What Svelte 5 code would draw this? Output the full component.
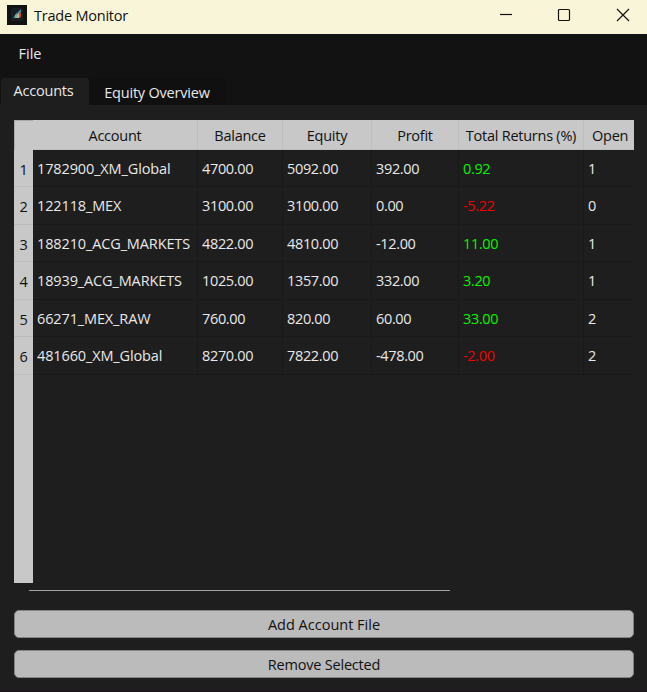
<script>
    let tab = 'accounts';

    const columns = [
        { key: 'account', label: 'Account' },
        { key: 'balance', label: 'Balance' },
        { key: 'equity', label: 'Equity' },
        { key: 'profit', label: 'Profit' },
        { key: 'returns', label: 'Total Returns (%)' },
        { key: 'open', label: 'Open' }
    ];

    const accounts = [
        { account: '1782900_XM_Global', balance: '4700.00', equity: '5092.00', profit: '392.00', returns: '0.92', open: 1 },
        { account: '122118_MEX', balance: '3100.00', equity: '3100.00', profit: '0.00', returns: '-5.22', open: 0 },
        { account: '188210_ACG_MARKETS', balance: '4822.00', equity: '4810.00', profit: '-12.00', returns: '11.00', open: 1 },
        { account: '18939_ACG_MARKETS', balance: '1025.00', equity: '1357.00', profit: '332.00', returns: '3.20', open: 1 },
        { account: '66271_MEX_RAW', balance: '760.00', equity: '820.00', profit: '60.00', returns: '33.00', open: 2 },
        { account: '481660_XM_Global', balance: '8270.00', equity: '7822.00', profit: '-478.00', returns: '-2.00', open: 2 }
    ];
</script>

<div class="window">
    <header class="titlebar">
        <svg class="logo" width="20" height="20" viewBox="0 0 20 20">
            <rect width="20" height="20" fill="#111313" />
            <rect x="4" y="3" width="12" height="13" rx="2" fill="#1b1e20" />
            <path d="M6 13L8 10V13Z" fill="#397f80" />
            <path d="M8 13V10L10 8V13Z" fill="#73b7a2" />
            <path d="M9 9L14 4V7L10 11Z" fill="#3e8db0" />
            <path d="M10 13V10L12 8V13Z" fill="#c5b09a" />
            <path d="M12 13V9L14 7V12Z" fill="#d64a28" />
        </svg>
        <span class="title">Trade Monitor</span>
        <div class="controls">
            <button aria-label="Minimize">
                <svg width="14" height="14" viewBox="0 0 14 14"><path d="M1 6.5H13" /></svg>
            </button>
            <button aria-label="Maximize">
                <svg width="14" height="14" viewBox="0 0 14 14"><rect x="1.5" y="1.5" width="11" height="11" rx="1" /></svg>
            </button>
            <button aria-label="Close">
                <svg width="14" height="14" viewBox="0 0 14 14"><path d="M1 1L13 13M13 1L1 13" /></svg>
            </button>
        </div>
    </header>

    <nav class="menubar"><span>File</span></nav>

    <div class="tabs">
        <button class="tab" class:active={tab === 'accounts'} on:click={() => (tab = 'accounts')}>Accounts</button>
        <button class="tab overview" class:active={tab === 'equity'} on:click={() => (tab = 'equity')}>Equity Overview</button>
    </div>

    <main class="pane">
        <div class="table">
            <div class="row head">
                <span class="corner"></span>
                {#each columns as col}
                    <span class="th {col.key}">{col.label}</span>
                {/each}
            </div>
            {#each accounts as acc, i}
                <div class="row">
                    <span class="index">{i + 1}</span>
                    {#each columns as col}
                        <span
                            class="td {col.key}"
                            class:gain={col.key === 'returns' && Number(acc.returns) >= 0}
                            class:loss={col.key === 'returns' && Number(acc.returns) < 0}
                        >{acc[col.key]}</span>
                    {/each}
                </div>
            {/each}
            <div class="gutter"></div>
        </div>
        <div class="scroll"><div class="thumb"></div></div>
        <button class="action">Add Account File</button>
        <button class="action remove">Remove Selected</button>
    </main>
</div>

<style>
    :global(body) {
        background: #1e1e1e;
        overflow: hidden;
    }

    .window {
        box-sizing: border-box;
        display: flex;
        flex-direction: column;
        width: 647px;
        height: 692px;
        background: #1e1e1e;
        border-bottom: 1px solid #180f14;
        color: #e8e8e8;
        font-family: "Open Sans", "Noto Sans", sans-serif;
        font-size: 14.5px;
        letter-spacing: -0.35px;
        white-space: nowrap;
    }

    button {
        padding: 0;
        border: none;
        background: none;
        color: inherit;
        font: inherit;
        letter-spacing: inherit;
    }

    .titlebar {
        display: flex;
        height: 34px;
        flex: none;
        background: #f9f5d9;
        color: #111;
    }

    .logo {
        margin: 5px 7px 0 7px;
    }

    .title {
        line-height: 32px;
        letter-spacing: -0.22px;
    }

    .controls {
        display: flex;
        margin-left: auto;
        margin-right: -5px;
    }

    .controls button {
        display: flex;
        justify-content: center;
        width: 58.5px;
        padding-top: 8px;
    }

    .controls svg {
        fill: none;
        stroke: #111;
        stroke-width: 1.2;
    }

    .menubar {
        height: 44px;
        flex: none;
        padding-left: 18.5px;
        background: #121212;
        line-height: 40px;
        letter-spacing: 0;
    }

    .tabs {
        display: flex;
        height: 27px;
        flex: none;
        padding-left: 1px;
        background: #121212;
    }

    .tab {
        width: 88px;
        padding: 0 3px 2px 0;
        line-height: 25px;
        letter-spacing: -0.2px;
    }

    .tab.overview {
        width: 137px;
        padding: 1px 1px 0 0;
        background: #101010;
        letter-spacing: -0.2px;
    }

    .tab.active {
        border-radius: 3px 3px 0 0;
        background: #1e1e1e;
    }

    .pane {
        display: flex;
        flex: 1;
        flex-direction: column;
        padding: 15px 13px 0 14px;
    }

    .table {
        display: flex;
        flex-direction: column;
        height: 463px;
        overflow: hidden;
    }

    .row {
        display: grid;
        grid-template-columns: 19px 165px 85px 89px 87px 125px 50px;
        grid-template-rows: 100%;
        height: 37.45px;
        flex: none;
    }

    .row.head {
        height: 30px;
        background: #c8c8c8;
        color: #111;
    }

    .corner {
        border-top: 1px solid #aaa;
        border-left: 1px solid #aaa;
    }

    .th,
    .td {
        box-sizing: border-box;
        border-right: 1px solid #191919;
        border-bottom: 1px solid #191919;
    }

    .th {
        border-color: #bebebe;
        text-align: center;
        line-height: 31px;
        letter-spacing: -0.25px;
    }

    .td {
        padding-left: 4px;
        line-height: 37px;
    }

    .td.account {
        letter-spacing: -0.13px;
    }

    .th.open,
    .td.open {
        border-right: none;
    }

    .th.open {
        padding-left: 8px;
        text-align: left;
    }

    .td.gain {
        color: #00f500;
    }

    .td.loss {
        color: #f00000;
    }

    .index {
        box-sizing: border-box;
        border-bottom: 1px solid #bdbdbd;
        background: #c8c8c8;
        color: #111;
        text-align: center;
        line-height: 39px;
    }

    .gutter {
        width: 19px;
        flex: 1;
        background: #c8c8c8;
    }

    .scroll {
        height: 27px;
        flex: none;
        padding: 7px 0 0 15px;
        box-sizing: border-box;
    }

    .thumb {
        width: 421px;
        height: 1px;
        border-radius: 1px;
        background: #a5a5a5;
    }

    .action {
        box-sizing: border-box;
        height: 28px;
        flex: none;
        margin-bottom: 12px;
        padding-top: 1px;
        border: 1px solid #858585;
        border-radius: 5px;
        background: #bbb;
        color: #111;
        line-height: 25px;
        letter-spacing: 0;
    }

    .action.remove {
        letter-spacing: -0.2px;
    }
</style>
